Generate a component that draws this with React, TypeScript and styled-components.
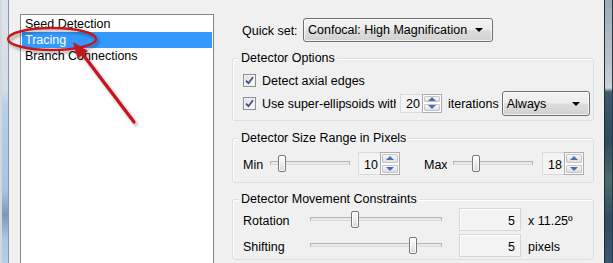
import React from 'react';
import styled, { createGlobalStyle } from 'styled-components';

const GlobalStyle = createGlobalStyle`
  html, body {
    margin: 0;
    padding: 0;
    background: #f0f0f0;
    overflow: hidden;
  }
`;

const Window = styled.div`
  position: relative;
  display: flex;
  width: 613px;
  height: 263px;
  overflow: hidden;
  background: #f0f0f0;
  font-family: 'Liberation Sans', Arial, sans-serif;
  font-size: 12.5px;
  color: #000;
`;

const LeftFrame = styled.div`
  flex: 0 0 9px;
  box-sizing: border-box;
  border-left: 2px solid #d3d8de;
  border-right: 1px solid #8596a8;
  background: linear-gradient(
    to bottom,
    #dde3ea 0,
    #d5dde6 90px,
    #b7cfe9 105px,
    #aac5e3 190px,
    #7f98b6 215px,
    #afc8e4 240px,
    #b7cfe9 100%
  );
`;

const RightFrame = styled.div`
  flex: 0 0 9px;
  box-sizing: border-box;
  border-left: 1px solid #1f2a33;
  border-right: 1px solid #2a3640;
  background: linear-gradient(
    to bottom,
    #9aabb9 0,
    #b7c3cc 60px,
    #c9d2d8 88px,
    #3d5a6e 92px,
    #2d4a5e 140px,
    #4a6a6a 180px,
    #2f4c62 220px,
    #3a5870 100%
  );
`;

const Content = styled.div`
  flex: 1;
  display: flex;
  align-items: flex-start;
`;

const ListColumn = styled.div`
  padding: 14px 0 0 11px;
`;

const ListBox = styled.ul`
  box-sizing: border-box;
  width: 194px;
  height: 262px;
  margin: 0;
  padding: 1px;
  list-style: none;
  background: #fff;
  border: 1px solid #828790;
`;

const ListItem = styled.li<{ selected?: boolean }>`
  height: 16px;
  line-height: 16px;
  padding-left: 3px;
  white-space: nowrap;
  background: ${({ selected }) => (selected ? '#3399ff' : 'transparent')};
  color: ${({ selected }) => (selected ? '#fff' : '#000')};
`;

const OptionsPanel = styled.div`
  width: 362px;
  margin-left: 18px;
  display: flex;
  flex-direction: column;
`;

const QuickRow = styled.div`
  display: flex;
  align-items: center;
  height: 23px;
  margin-top: 18px;
  padding-left: 10px;
`;

const QuickLabel = styled.span`
  width: 61px;
  padding-top: 3px;
`;

const Combo = styled.div<{ width: number; height: number; gap?: number }>`
  box-sizing: border-box;
  flex: 0 0 auto;
  width: ${({ width }) => width}px;
  height: ${({ height }) => height}px;
  margin-left: ${({ gap = 0 }) => gap}px;
  display: flex;
  align-items: center;
  justify-content: space-between;
  padding: 1px 9px 0 4px;
  border: 1px solid #707070;
  border-radius: 3px;
  background: linear-gradient(to bottom, #f3f3f3 0%, #ececec 48%, #dedede 52%, #d1d1d1 100%);
  box-shadow: inset 0 0 0 1px rgba(255, 255, 255, 0.7);
  white-space: nowrap;
`;

const ComboArrow = styled.span`
  width: 0;
  height: 0;
  border-left: 4px solid transparent;
  border-right: 4px solid transparent;
  border-top: 4px solid #000;
`;

const Group = styled.div<{ gap: number }>`
  margin-top: ${({ gap }) => gap}px;
  border: 1px solid #d5dfe5;
  border-radius: 3px;
  box-shadow: inset 1px 1px 0 #fff;
`;

const GroupTitle = styled.div`
  width: fit-content;
  height: 14px;
  line-height: 14px;
  margin: -8px 0 0 6px;
  padding: 0 2px;
  background: #f0f0f0;
`;

const GroupBody = styled.div<{ top: number; bottom: number; rowGap?: number }>`
  display: flex;
  flex-direction: column;
  gap: ${({ rowGap = 0 }) => rowGap}px;
  padding: ${({ top }) => top}px 0 ${({ bottom }) => bottom}px 10px;
`;

const Row = styled.div<{ height: number }>`
  display: flex;
  align-items: center;
  height: ${({ height }) => height}px;
`;

const Label = styled.span<{ width?: number; gap?: number }>`
  flex: 0 0 auto;
  width: ${({ width }) => (width ? `${width}px` : 'auto')};
  margin-left: ${({ gap = 0 }) => gap}px;
  white-space: nowrap;
  overflow: hidden;
  padding-top: 2px;
`;

const CheckBox = styled.span`
  box-sizing: border-box;
  flex: 0 0 13px;
  width: 13px;
  height: 13px;
  margin-right: 6px;
  display: flex;
  align-items: center;
  justify-content: center;
  border: 1px solid #8e8f8f;
  background: linear-gradient(135deg, #dcdcdc 0%, #f4f4f4 70%, #fdfdfd 100%);
  box-shadow: inset 0 0 0 1px #f4f4f4;
`;

const Spinner = styled.div<{ gap?: number; height: number }>`
  display: flex;
  flex: 0 0 auto;
  height: ${({ height }) => height}px;
  margin-left: ${({ gap = 0 }) => gap}px;
`;

const SpinField = styled.div<{ width: number }>`
  box-sizing: border-box;
  width: ${({ width }) => width}px;
  display: flex;
  align-items: center;
  padding: 2px 0 0 5px;
  background: #f4f4f4;
  border: 1px solid #dadada;
  border-right: none;
`;

const SpinButtons = styled.div`
  box-sizing: border-box;
  width: 20px;
  display: flex;
  flex-direction: column;
  border: 1px solid #acacac;
  background: #fdfdfd;
`;

const SpinButton = styled.div<{ down?: boolean }>`
  flex: 1;
  display: flex;
  align-items: center;
  justify-content: center;
  margin: 1px;
  background: linear-gradient(to bottom, #f6f6f6, #dedede);
  border: 1px solid #c6c6c6;
  border-radius: 1px;

  &::after {
    content: '';
    width: 0;
    height: 0;
    border-left: 4px solid transparent;
    border-right: 4px solid transparent;
    ${({ down }) => (down ? 'border-top' : 'border-bottom')}: 4px solid #4b6cb7;
  }
`;

const Slider = styled.div<{ width: number; gap?: number }>`
  position: relative;
  flex: 0 0 auto;
  width: ${({ width }) => width}px;
  height: 17px;
  margin-left: ${({ gap = 0 }) => gap}px;
  display: flex;
  align-items: center;
`;

const Track = styled.div`
  box-sizing: border-box;
  width: 100%;
  height: 4px;
  margin-top: -1px;
  border: 1px solid #b4b4b4;
  border-bottom-color: #dcdcdc;
  background: #e7eaea;
`;

const Thumb = styled.div<{ at: number }>`
  position: absolute;
  top: 0;
  left: ${({ at }) => at}px;
  box-sizing: border-box;
  width: 8px;
  height: 17px;
  border: 1px solid #787878;
  border-radius: 2px;
  background: linear-gradient(to bottom, #fefefe 0%, #ececec 50%, #d8d8d8 100%);
  box-shadow: inset 0 0 0 1px rgba(255, 255, 255, 0.8);
`;

const ValueBox = styled.div<{ gap: number }>`
  box-sizing: border-box;
  width: 62px;
  height: 23px;
  margin-left: ${({ gap }) => gap}px;
  padding: 2px 5px 0 0;
  display: flex;
  align-items: center;
  justify-content: flex-end;
  background: #f3f3f3;
  border: 1px solid #d6d6d6;
  box-shadow: inset 1px 1px 0 #fff;
`;

const Annotation = styled.svg`
  position: absolute;
  left: 0;
  top: 0;
  pointer-events: none;
`;

const Check = () => (
  <CheckBox>
    <svg width="9" height="9" viewBox="0 0 9 9">
      <path d="M1 4.6 L3.4 7.2 L8 1.2" fill="none" stroke="#3b4f8a" strokeWidth="1.8" />
    </svg>
  </CheckBox>
);

const Spin = ({ value, gap, height, field }: { value: number; gap?: number; height: number; field: number }) => (
  <Spinner gap={gap} height={height}>
    <SpinField width={field}>{value}</SpinField>
    <SpinButtons>
      <SpinButton />
      <SpinButton down />
    </SpinButtons>
  </Spinner>
);

const steps = ['Seed Detection', 'Tracing', 'Branch Connections'];

const App = () => (
  <>
    <GlobalStyle />
    <Window>
      <LeftFrame />
      <Content>
        <ListColumn>
          <ListBox>
            {steps.map(step => (
              <ListItem key={step} selected={step === 'Tracing'}>
                {step}
              </ListItem>
            ))}
          </ListBox>
        </ListColumn>

        <OptionsPanel>
          <QuickRow>
            <QuickLabel>Quick set:</QuickLabel>
            <Combo width={190} height={24}>
              Confocal: High Magnification
              <ComboArrow />
            </Combo>
          </QuickRow>

          <Group gap={17}>
            <GroupTitle>Detector Options</GroupTitle>
            <GroupBody top={5} bottom={5} rowGap={1}>
              <Row height={20}>
                <Check />
                <Label>Detect axial edges</Label>
              </Row>
              <Row height={24}>
                <Check />
                <Label width={134}>Use super-ellipsoids with</Label>
                <Spin value={20} gap={4} height={19} field={22} />
                <Label gap={6}>iterations</Label>
                <Combo width={88} height={25} gap={3}>
                  Always
                  <ComboArrow />
                </Combo>
              </Row>
            </GroupBody>
          </Group>

          <Group gap={17}>
            <GroupTitle>Detector Size Range in Pixels</GroupTitle>
            <GroupBody top={7} bottom={7}>
              <Row height={23}>
                <Label width={20}>Min</Label>
                <Slider width={80} gap={7}>
                  <Track />
                  <Thumb at={8} />
                </Slider>
                <Spin value={10} gap={8} height={23} field={22} />
                <Label width={23} gap={24}>Max</Label>
                <Slider width={80} gap={6}>
                  <Track />
                  <Thumb at={19} />
                </Slider>
                <Spin value={18} gap={9} height={23} field={22} />
              </Row>
            </GroupBody>
          </Group>

          <Group gap={16}>
            <GroupTitle>Detector Movement Constraints</GroupTitle>
            <GroupBody top={2} bottom={2} rowGap={3}>
              <Row height={23}>
                <Label width={67}>Rotation</Label>
                <Slider width={132}>
                  <Track />
                  <Thumb at={41} />
                </Slider>
                <ValueBox gap={17}>5</ValueBox>
                <Label gap={7}>x 11.25º</Label>
              </Row>
              <Row height={23}>
                <Label width={67}>Shifting</Label>
                <Slider width={132}>
                  <Track />
                  <Thumb at={99} />
                </Slider>
                <ValueBox gap={17}>5</ValueBox>
                <Label gap={7}>pixels</Label>
              </Row>
            </GroupBody>
          </Group>
        </OptionsPanel>
      </Content>
      <RightFrame />

      <Annotation width="613" height="263" viewBox="0 0 613 263">
        <defs>
          <filter id="shade" x="-20%" y="-20%" width="140%" height="140%">
            <feDropShadow dx="2" dy="2.5" stdDeviation="1.6" floodColor="#000" floodOpacity="0.35" />
          </filter>
        </defs>
        <g filter="url(#shade)">
          <ellipse cx="52" cy="39" rx="44" ry="11" fill="none" stroke="#c4161d" strokeWidth="2.4" />
          <line x1="134" y1="122" x2="81" y2="52" stroke="#c4161d" strokeWidth="3.2" strokeLinecap="round" />
          <polygon points="73,42 88,51 77.5,58.6" fill="#c4161d" />
        </g>
      </Annotation>
    </Window>
  </>
);

export default App;
